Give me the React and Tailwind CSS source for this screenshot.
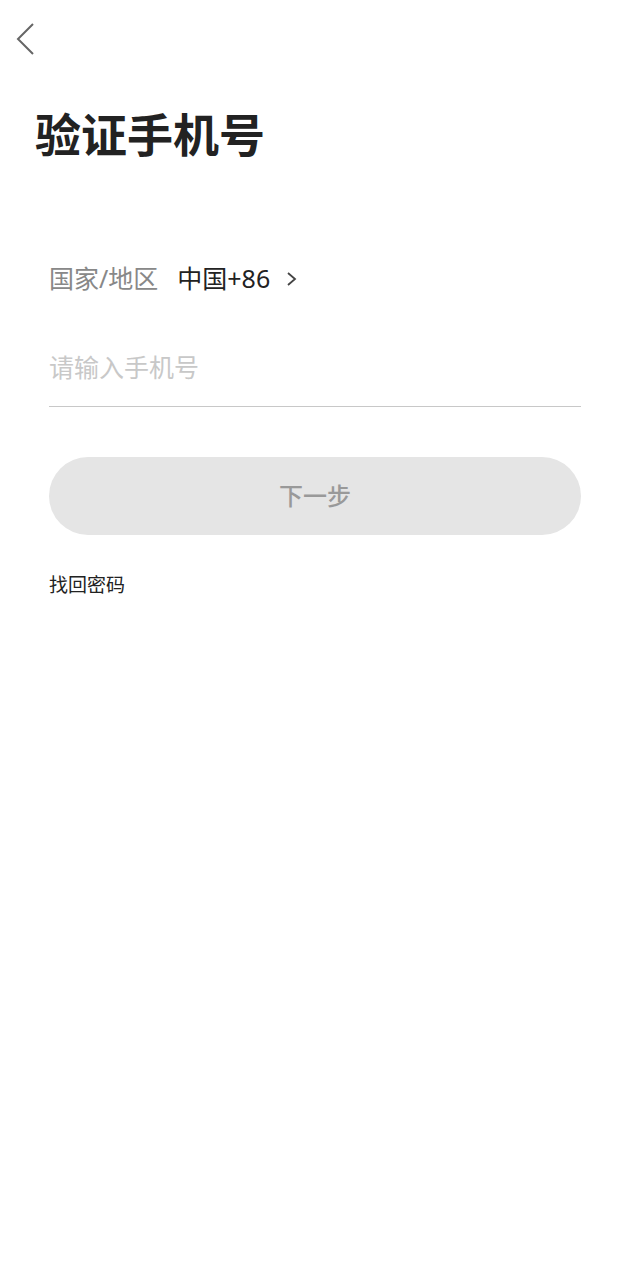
export default function App() {
  return (
    <div
      className="w-[630px] h-[1280px] bg-white flex flex-col"
      style={{ fontFamily: '"Noto Sans", "Noto Sans CJK SC", sans-serif' }}
    >
      {/* Header back */}
      <div className="h-[80px] pl-[15px] pt-[22px]">
        <svg width="22" height="34" viewBox="0 0 22 34" fill="none">
          <path d="M18 2 L3 17 L18 32" stroke="#666" strokeWidth="2" />
        </svg>
      </div>

      {/* Title */}
      <h1 className="pl-[35px] mt-[24px] text-[46px] leading-[60px] font-bold text-[#222]">
        验证手机号
      </h1>

      <div className="px-[49px] mt-[95px] flex flex-col">
        {/* Region */}
        <div className="flex items-center h-[40px] text-[25px]">
          <span className="text-[#888]">国家/地区</span>
          <span className="ml-[19px] text-[#222]">中国+86</span>
          <svg className="ml-[16px]" width="12" height="16" viewBox="0 0 12 16" fill="none">
            <path d="M2 2 L9 8 L2 14" stroke="#444" strokeWidth="1.8" />
          </svg>
        </div>

        {/* Phone input */}
        <div className="mt-[50px] h-[58px] border-b border-[#c8c8c8] flex items-start">
          <input
            className="w-full text-[25px] leading-[36px] outline-none placeholder:text-[#c8c8c8] text-[#222]"
            placeholder="请输入手机号"
          />
        </div>

        {/* Next button */}
        <button className="mt-[50px] h-[78px] w-full rounded-full bg-[#e5e5e5] text-[24px] font-medium text-[#999]">
          下一步
        </button>

        <div className="mt-[36px] text-[19px] text-[#222]">找回密码</div>
      </div>
    </div>
  )
}
